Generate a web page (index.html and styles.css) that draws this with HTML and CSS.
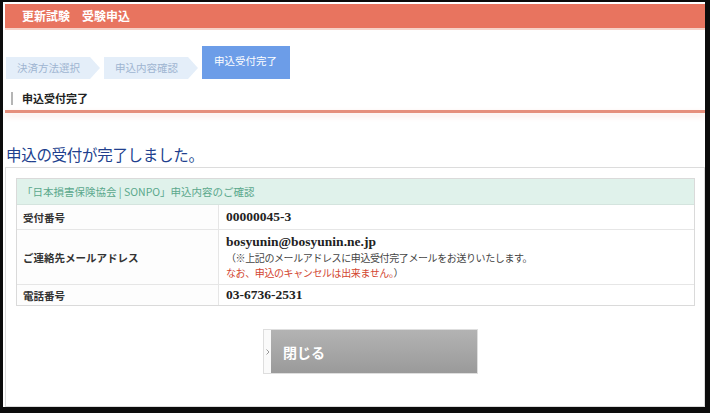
FILE: index.html
```html
<!DOCTYPE html>
<html lang="ja">
<head>
<meta charset="utf-8">
<title>申込受付完了</title>
<link rel="stylesheet" href="styles.css">
</head>
<body>
<div class="page">
  <div class="topbar">更新試験　受験申込</div>
  <div class="topbar-line"></div>

  <div class="steps">
    <div class="step"><span class="step-label">決済方法選択</span><span class="step-arrow"></span></div>
    <div class="step"><span class="step-label">申込内容確認</span><span class="step-arrow"></span></div>
    <div class="step step-active"><span class="step-label">申込受付完了</span></div>
  </div>

  <div class="section-title"><span class="section-mark"></span>申込受付完了</div>
  <div class="section-rule"></div>

  <h1 class="lead">申込の受付が完了しました。</h1>

  <div class="panel">
    <div class="info">
      <div class="info-caption">「日本損害保険協会 | SONPO」申込内容のご確認</div>
      <div class="info-row row-1">
        <div class="info-label">受付番号</div>
        <div class="info-value"><span class="serif">00000045-3</span></div>
      </div>
      <div class="info-row row-2">
        <div class="info-label">ご連絡先メールアドレス</div>
        <div class="info-value">
          <span class="serif">bosyunin@bosyunin.ne.jp</span>
          <span class="note">（※上記のメールアドレスに申込受付完了メールをお送りいたします。</span>
          <span class="note"><span class="warn">なお、申込のキャンセルは出来ません。</span>）</span>
        </div>
      </div>
      <div class="info-row row-3">
        <div class="info-label">電話番号</div>
        <div class="info-value"><span class="serif">03-6736-2531</span></div>
      </div>
    </div>

    <div class="actions">
      <button class="close-btn" type="button">
        <span class="btn-tab"><svg width="4" height="6" viewBox="0 0 4 6"><path d="M0.5 0.5 L3 3 L0.5 5.5" fill="none" stroke="#999" stroke-width="1"/></svg></span>
        <span class="btn-text">閉じる</span>
      </button>
    </div>
  </div>
</div>
</body>
</html>
```

FILE: styles.css
```css
html, body {
  margin: 0;
  padding: 0;
  background: #0c0c0c;
}
body {
  font-family: "Noto Sans CJK JP", "Noto Sans", sans-serif;
  color: #333;
}
.page {
  background: #fff;
  margin: 2px 5px 0 3px;
  height: 405px;
  overflow: hidden;
  display: flex;
  flex-direction: column;
}
.topbar {
  margin: 2px 0 0 2px;
  height: 24px;
  background: #e8745f;
  color: #fff;
  font-weight: bold;
  font-size: 12px;
  line-height: 24px;
  padding-left: 17px;
}
.topbar-line {
  margin-left: 2px;
  height: 2px;
  background: #f6d2c8;
}
.steps {
  display: flex;
  align-items: flex-end;
  margin: 16px 0 0 3px;
  height: 33px;
}
.step {
  display: flex;
  align-items: center;
  margin-right: 4px;
}
.step-label {
  display: block;
  height: 22px;
  line-height: 22px;
  background: #e4eef9;
  color: #9fb5d1;
  font-size: 10.5px;
  padding: 0 10px 0 11px;
}
.step-arrow {
  width: 0;
  height: 0;
  border-top: 11px solid transparent;
  border-bottom: 11px solid transparent;
  border-left: 10px solid #e4eef9;
}
.step-active .step-label {
  height: 33px;
  line-height: 29px;
  background: #6c9de8;
  color: #fff;
  font-size: 10.5px;
  padding: 0 13px 0 12px;
}
.section-title {
  display: flex;
  align-items: center;
  margin: 12px 0 0 8px;
  height: 14px;
  font-size: 11px;
  font-weight: bold;
  color: #222;
}
.section-mark {
  width: 2px;
  height: 13px;
  background: #b5b5b5;
  margin-right: 9px;
}
.section-rule {
  margin: 5px 0 0 2px;
  height: 3px;
  background: #e58f7c;
  box-shadow: 0 3px 6px rgba(240, 170, 150, 0.35);
}
.lead {
  margin: 31px 0 3px 3px;
  font-size: 15.5px;
  font-weight: normal;
  color: #213f8e;
  line-height: 20px;
  letter-spacing: -0.3px;
}
.panel {
  margin: 0 0 0 2px;
  border: 1px solid #dcdcdc;
  height: 240px;
  box-sizing: border-box;
  padding: 10px 9px 0 10px;
}
.info {
  border: 1px solid #dadada;
}
.info-caption {
  height: 25px;
  line-height: 25px;
  background: #e0f2eb;
  color: #5aa88c;
  font-size: 10.5px;
  padding-left: 5px;
  border-bottom: 1px solid #d4e4de;
}
.info-row {
  display: grid;
  grid-template-columns: 202px 1fr;
  border-top: 1px solid #e6e6e6;
}
.info-caption + .info-row {
  border-top: none;
}
.row-1 { height: 24px; }
.row-2 { height: 54px; }
.row-3 { height: 20px; }
.info-label {
  display: flex;
  align-items: center;
  padding-left: 6px;
  font-size: 10.5px;
  font-weight: bold;
  color: #333;
  border-right: 1px solid #e6e6e6;
  background: #fdfdfd;
}
.info-value {
  display: flex;
  flex-direction: column;
  justify-content: center;
  padding-left: 7px;
}
.serif {
  font-family: "Liberation Serif", "Times New Roman", serif;
  font-weight: bold;
  font-size: 13.5px;
  color: #222;
  line-height: 16px;
}
.note {
  font-size: 10px;
  line-height: 15px;
  color: #444;
  letter-spacing: -0.4px;
}
.warn {
  color: #d2452f;
}
.actions {
  display: flex;
  padding: 23px 0 0 247px;
}
.close-btn {
  display: flex;
  align-items: stretch;
  width: 215px;
  height: 45px;
  padding: 0;
  margin: 0;
  border: 1px solid #dedede;
  background: #fff;
  font-family: inherit;
  cursor: pointer;
}
.btn-tab {
  width: 7px;
  display: flex;
  align-items: center;
  justify-content: center;
  background: #fafafa;
}
.btn-text {
  flex: 1;
  display: flex;
  align-items: center;
  padding-left: 12px;
  background: linear-gradient(#b3b3b3, #9a9a9a);
  color: #fff;
  font-size: 14px;
  font-weight: bold;
}
```
